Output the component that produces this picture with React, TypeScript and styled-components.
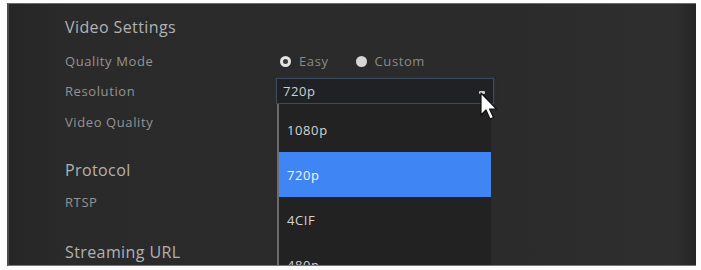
import React from "react";
import styled, { createGlobalStyle } from "styled-components";

const GlobalStyle = createGlobalStyle`
  html, body {
    margin: 0;
    padding: 0;
    background: #ffffff;
  }
  body {
    font-family: "Open Sans", "Liberation Sans", sans-serif;
  }
`

const Frame = styled.div`
  width: 701px;
  height: 270px;
  box-sizing: border-box;
  padding: 3px 5px 4px 7px;
  background: #fdfdfd;
`

const Panel = styled.div`
  position: relative;
  height: 100%;
  box-sizing: border-box;
  background: linear-gradient(90deg, #262626 0%, #2a2a2a 8%, #2b2b2b 70%, #2e2e2e 97%, #252525 100%);
  border-left: 2px solid #4a4a4a;
  border-top: 1px solid #6a6a6a;
  border-bottom: 1px solid #777;
  padding: 9px 0 0 56px;
  overflow: hidden;
`

const SectionTitle = styled.div<{ $top?: number }>`
  height: 28px;
  margin-top: ${p => p.$top ?? 0}px;
  display: flex;
  align-items: center;
  font-size: 16px;
  letter-spacing: 0.4px;
  color: #b2b2b2;
`

const Row = styled.div<{ $h?: number; $top?: number }>`
  display: grid;
  grid-template-columns: 211px 1fr;
  align-items: center;
  height: ${p => p.$h ?? 30}px;
  margin-top: ${p => p.$top ?? 0}px;
`

const Label = styled.div`
  font-size: 13px;
  letter-spacing: 0.6px;
  color: #949494;
`

const RadioGroup = styled.div`
  display: flex;
  align-items: center;
  gap: 27px;
  padding-left: 4px;
`

const RadioOption = styled.label`
  display: flex;
  align-items: center;
  gap: 8px;
  font-size: 13px;
  letter-spacing: 0.6px;
  color: #8a8a8a;
`

const RadioDot = styled.span<{ $checked?: boolean }>`
  width: 11px;
  height: 11px;
  box-sizing: border-box;
  border-radius: 50%;
  background: ${p => (p.$checked ? "#3a3a3a" : "#d6d6d6")};
  border: ${p => (p.$checked ? "3px solid #e4e4e4" : "none")};
`

const SelectWrap = styled.div`
  position: relative;
  width: 218px;
`

const SelectBox = styled.div`
  height: 26px;
  box-sizing: border-box;
  border: 1px solid #3c4a5c;
  box-shadow: 0 0 2px #2f4055;
  background: #1f2124;
  display: flex;
  align-items: center;
  justify-content: space-between;
  padding: 0 8px 0 6px;
  font-size: 13px;
  letter-spacing: 0.6px;
  color: #cfcfcf;
`

const Caret = styled.span`
  width: 6px;
  height: 3px;
  border-radius: 1px;
  background: #cfcfcf;
  margin-top: 2px;
`

const Menu = styled.ul`
  position: absolute;
  top: 100%;
  left: 1px;
  width: 214px;
  margin: 0;
  padding: 3px 0 0 0;
  list-style: none;
  background: #222222;
  border-left: 2px solid #6c6c6c;
  box-sizing: border-box;
`

const MenuItem = styled.li<{ $active?: boolean }>`
  height: 45px;
  display: flex;
  align-items: center;
  padding-left: 8px;
  font-size: 13px;
  letter-spacing: 0.6px;
  color: ${p => (p.$active ? "#f2f4ff" : "#d4d4d4")};
  background: ${p => (p.$active ? "#3f86f4" : "transparent")};
`

const Cursor = styled.svg`
  position: absolute;
  left: 203px;
  top: 14px;
`

export default function App() {
  const options = ["1080p", "720p", "4CIF", "480p"];
  return (
    <Frame>
      <GlobalStyle />
      <Panel>
        <SectionTitle>Video Settings</SectionTitle>
        <Row $top={5}>
          <Label>Quality Mode</Label>
          <RadioGroup>
            <RadioOption><RadioDot $checked />Easy</RadioOption>
            <RadioOption><RadioDot />Custom</RadioOption>
          </RadioGroup>
        </Row>
        <Row style={{ position: "relative", zIndex: 2 }}>
          <Label>Resolution</Label>
          <SelectWrap>
            <SelectBox>
              720p
              <Caret />
            </SelectBox>
            <Menu>
              {options.map(o => (
                <MenuItem key={o} $active={o === "720p"}>{o}</MenuItem>
              ))}
            </Menu>
            <Cursor width="24" height="32" viewBox="0 0 24 32">
              <path d="M2 1 L2 23 L7 18 L11 27 L14.5 25.5 L10.5 17 L17.5 17 Z" fill="#ffffff" stroke="#111" strokeWidth="1.2" strokeLinejoin="round" />
            </Cursor>
          </SelectWrap>
        </Row>
        <Row $h={32}>
          <Label>Video Quality</Label>
        </Row>
        <SectionTitle $top={18}>Protocol</SectionTitle>
        <Row $h={28} $top={4}>
          <Label>RTSP</Label>
        </Row>
        <SectionTitle $top={22}>Streaming URL</SectionTitle>
      </Panel>
    </Frame>
  );
}
